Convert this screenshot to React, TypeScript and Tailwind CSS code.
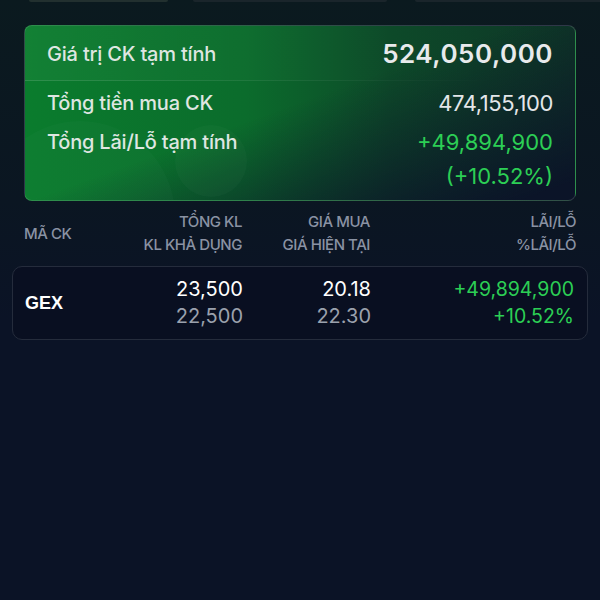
import React from "react";

const font = { fontFamily: "Inter, 'Noto Sans', sans-serif" };

export default function App() {
  return (
    <div
      className="w-[600px] h-[600px] overflow-hidden bg-[linear-gradient(180deg,#0b1a1f_0px,#0b1622_200px,#0b1326_320px,#0b1326_600px)]"
      style={font}
    >
      {/* tab fragments */}
      <div className="flex h-[3px]">
        <div className="ml-[29px] w-[139px] h-[2px] bg-[#22302f] rounded-b" />
        <div className="ml-[25px] w-[194px] h-[2px] bg-[#1a252b] rounded-b" />
        <div className="ml-[28px] flex-1 h-[2px] bg-[#1a252b] rounded-bl" />
      </div>

      {/* summary card */}
      <div className="mx-6 mt-[22px] relative overflow-hidden rounded-lg border border-white/15 bg-[linear-gradient(160deg,transparent_47%,#0b1428_95%),linear-gradient(90deg,#0a7c2d_0%,#0b6c2c_40%,#0d4a29_66%,#0e3527_100%)] h-[176px]">
        <div className="absolute left-[150px] top-[99px] w-[72px] h-[72px] rounded-full bg-white/[0.025]" />
        <div className="absolute -left-[40px] top-[95px] w-[190px] h-[190px] rounded-full bg-white/[0.02]" />
        <div className="relative flex flex-col">
          <div className="relative flex items-center justify-between h-[55px] px-[22px] bg-[linear-gradient(90deg,rgba(255,255,255,0.035),rgba(255,255,255,0)_70%)]">
            <span className="text-[20px] font-medium text-[#dfe6e1] tracking-[-0.01em]">Giá trị CK tạm tính</span>
            <span className="text-[26px] font-semibold text-[#e8eaec] tracking-[0.02em]">524,050,000</span>
            <div className="absolute left-0 right-0 bottom-0 h-px bg-[linear-gradient(90deg,rgba(255,255,255,0.12),rgba(255,255,255,0.06)_50%,rgba(255,255,255,0)_85%)]" />
          </div>
          <div className="flex items-center justify-between px-[22px] pt-[4px] h-[40px]">
            <span className="text-[20px] font-medium text-[#dfe6e1] tracking-[-0.01em]">Tổng tiền mua CK</span>
            <span className="text-[22px] text-[#e3e6e9] tracking-[-0.02em]">474,155,100</span>
          </div>
          <div className="flex justify-between px-[22px] pt-[4px]">
            <span className="text-[20px] font-medium text-[#dfe6e1] leading-[34px] tracking-[-0.01em]">Tổng Lãi/Lỗ tạm tính</span>
            <div className="flex flex-col items-end text-[22px] text-[#2ccf55] leading-[34px]">
              <span>+49,894,900</span>
              <span>(+10.52%)</span>
            </div>
          </div>
        </div>
      </div>

      {/* table header */}
      <div className="grid grid-cols-[96px_122px_128px_1fr] px-6 mt-[9px] text-[15px] font-medium text-[#8a92a3] tracking-[-0.03em] leading-[23px]">
        <div className="flex items-center">MÃ CK</div>
        <div className="flex flex-col items-end">
          <span>TỔNG KL</span>
          <span>KL KHẢ DỤNG</span>
        </div>
        <div className="flex flex-col items-end">
          <span>GIÁ MUA</span>
          <span>GIÁ HIỆN TẠI</span>
        </div>
        <div className="flex flex-col items-end">
          <span>LÃI/LỖ</span>
          <span>%LÃI/LỖ</span>
        </div>
      </div>

      {/* row */}
      <div className="mx-3 mt-[10px] rounded-[10px] border border-[#252c3c] bg-[#090f21] h-[74px] px-3 grid grid-cols-[96px_122px_128px_1fr] items-center">
        <div className="text-[18px] font-semibold text-white" style={{ fontFamily: "'Liberation Sans', Arial, sans-serif" }}>
          GEX
        </div>
        <div className="flex flex-col items-end leading-[27px] text-[20px]">
          <span className="text-white">23,500</span>
          <span className="text-[#9ba1ad]">22,500</span>
        </div>
        <div className="flex flex-col items-end leading-[27px] text-[20px]">
          <span className="text-white">20.18</span>
          <span className="text-[#9ba1ad]">22.30</span>
        </div>
        <div className="flex flex-col items-end leading-[27px] text-[19.5px] text-[#2ccf55] pr-[1px]">
          <span>+49,894,900</span>
          <span>+10.52%</span>
        </div>
      </div>
    </div>
  );
}
